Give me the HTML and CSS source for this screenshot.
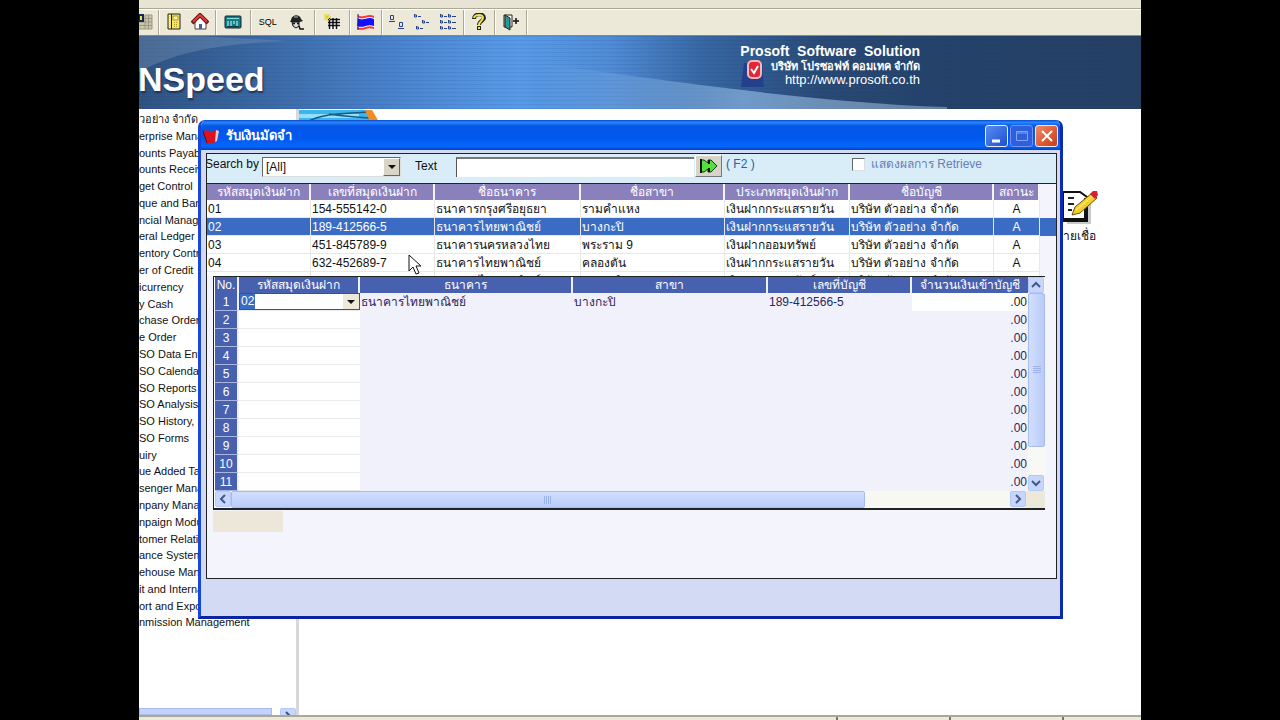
FILE: index.html
```
<!DOCTYPE html>
<html lang="th">
<head>
<meta charset="utf-8">
<title>WINSpeed</title>
<link rel="stylesheet" href="styles.css">
</head>
<body>
<div class="screen">
<header class="toolbar">
  <div class="toolbar-top"></div>
  <div class="tools">
    <div class="tool-group first"><button class="tool" aria-label="Tables"><svg width="14" height="16"><path d="M6 1h7v14H0V8" fill="#c9c6a8"/><path d="M6 1v14M9.500 1v14M13 1v14M0 8h13M0 11.500h13M0 15h13M6 4.500h7M6 1h7" stroke="#9a9884"/><path d="M0 1h4v6H0z" fill="#e8e060" stroke="#16245c" stroke-width="2"/></svg></button></div>
    <div class="tool-group g1"><button class="tool" aria-label="Notebook"><svg width="16" height="18"><path d="M2 1h12v15H2z" fill="#f5e66a" stroke="#222"/><path d="M5.500 1v15" stroke="#222"/><path d="M3.500 2v13" stroke="#fff" stroke-dasharray="1 1"/><path d="M7 3h5v4H7z" fill="#fff8b0" stroke="#a89520"/><path d="M8 9.500h4M8 11.500h4M8 13.500h4" stroke="#a89520" stroke-dasharray="1 1"/></svg></button>
    <button class="tool" aria-label="Home"><svg width="18" height="18"><path d="M4 9v7h11V9L9 4z" fill="#fff" stroke="#444"/><path d="M1 10l8-8 8 8" fill="none" stroke="#611" stroke-width="4"/><path d="M2 9l7-7 7 7" fill="none" stroke="#e23a3a" stroke-width="2"/><path d="M8 11h3v5H8z" fill="#4a5aa0"/></svg></button></div>
    <div class="tool-group g2"><button class="tool" aria-label="Ledger"><svg width="18" height="16"><rect x="1" y="2" width="16" height="12" rx="1" fill="#157f86" stroke="#123"/><path d="M3 4.500h12" stroke="#7fe0e0" stroke-width="1"/><path d="M4 7v5M7 7v5M10 7v3M13 7v5" stroke="#cff" stroke-width="1"/><path d="M3 12.500h12" stroke="#0b3c44"/></svg></button></div>
    <div class="tool-group g3"><button class="tool sql">SQL</button>
    <button class="tool" aria-label="Inspector"><svg width="18" height="18"><path d="M3 7c1-6 9-6 10-1l2 2-3 1H2z" fill="#222"/><path d="M6 4h4" stroke="#bbb"/><path d="M4 9h7v4l-3 2-3-2z" fill="#ddd" stroke="#111"/><path d="M5 10.500h2M9 10.500h2M11 13l1 3h4" stroke="#111" stroke-width="1.500" fill="none"/></svg></button></div>
    <div class="tool-group g4"><button class="tool" aria-label="New grid"><svg width="18" height="18"><path d="M5 5h12v11H5z" fill="#fff"/><path d="M5 6.500h12M5 9.500h12M5 12.500h12M6.500 5v11M10 5v11M13.500 5v11" stroke="#111" stroke-width="1.500"/><path d="M4 1v7M1 4h7M1 1l6 6M7 1L1 7" stroke="#e4d000"/></svg></button></div>
    <div class="tool-group g5"><button class="tool" aria-label="Thai"><svg width="20" height="18"><path d="M2 2c5 4 9-2 16 1v13c-7-3-10 3-17 0z" fill="#f33"/><path d="M2 4c5 4 9-2 16 1v9c-7-3-10 3-17 0z" fill="#fff"/><path d="M2 5c5 4 9-2 16 1v7c-7-3-10 3-17 0z" fill="#11f"/><path d="M2 1v16" stroke="#229"/></svg></button></div>
    <div class="tool-group g6"><button class="tool" aria-label="Large icons"><svg width="18" height="16" fill="none" stroke="#27408c"><path d="M2.500 1.500h3v4h-3zM1 7.500h6M11.500 8.500h3v4h-3zM10 14.500h6"/></svg></button>
    <button class="tool" aria-label="Small icons"><svg width="18" height="16" fill="none" stroke="#27408c"><path d="M1.500 0v3h2v-2h-2M9.500 6v3h2v-2h-2M3.500 12v3h2v-2h-2M5 2.500h3M13 8.500h3M7 14.500h3"/></svg></button>
    <button class="tool" aria-label="List"><svg width="18" height="16" fill="none" stroke="#27408c"><path d="M1.500 0v3h2v-2h-2M9.500 0v3h2v-2h-2M1.500 6v3h2v-2h-2M9.500 6v3h2v-2h-2M1.500 12v3h2v-2h-2M9.500 12v3h2v-2h-2M5 2.500h3M13 2.500h4M5 8.500h3M13 8.500h4M5 14.500h3M13 14.500h4"/></svg></button></div>
    <div class="tool-group g7"><button class="tool" aria-label="Help"><svg width="16" height="18" fill="none"><path d="M3 6c0-6 10-6 10-1 0 3-5 3-5 7M8 13v4" stroke="#222" stroke-width="4"/><path d="M3 5c1-4 9-4 9 0 0 3-4 3-4 7M8 14v2" stroke="#f0e24a" stroke-width="2"/></svg></button></div>
    <div class="tool-group g8"><button class="tool" aria-label="Exit"><svg width="18" height="18"><path d="M2 2h8v12H2z" fill="#fff" stroke="#222"/><path d="M3 2l5 3v12l-5-3z" fill="#2a9a98" stroke="#222"/><path d="M11 8h6M14 5v6" stroke="#111" stroke-width="1.500"/></svg></button></div>
  </div>
</header>
<section class="banner">
  <svg class="banner-art" viewBox="0 0 1002 73" preserveAspectRatio="none"><defs><linearGradient id="sweep"><stop offset="0" stop-color="#8ab8ee" stop-opacity="0"/><stop offset=".5" stop-color="#8ab4e0" stop-opacity=".7"/><stop offset="1" stop-color="#a4bdd6" stop-opacity=".5"/></linearGradient></defs><path d="M0 36C40 14 90 7 150 5L60 0H0z" fill="#8aa6c4" opacity=".3"/><path d="M400 28C520 42 660 66 808 71V73H400z" fill="url(#sweep)"/></svg>
  <h1 class="brand">NSpeed</h1>
  <div class="vendor">
    <strong>Prosoft&nbsp; Software&nbsp; Solution</strong>
    <div class="vendor-row"><svg width="26" height="30"><path d="M4 4h18l2 24H1z" fill="#24408c"/><rect x="8" y="2" width="13" height="17" rx="4" fill="#e02838" stroke="#f7b8bc" stroke-width="2"/><path d="M11 10l3 4 4-7" fill="none" stroke="#fff" stroke-width="2"/></svg>
    <div class="vendor-text"><span class="vendor-th">บริษัท โปรซอฟท์ คอมเทค จำกัด</span><span class="vendor-url">http://www.prosoft.co.th</span></div></div>
  </div>
</section>
<main class="desk">
  <nav class="tree">
    <ul>
      <li>วอย่าง จำกัด</li><li>erprise Manager</li><li>ounts Payable</li><li>ounts Receivable</li><li>get Control</li><li>que and Bank</li><li>ncial Management</li><li>eral Ledger</li><li>entory Control</li><li>er of Credit</li><li>icurrency</li><li>y Cash</li><li>chase Order</li><li>e Order</li><li>SO Data Entry</li><li>SO Calendar</li><li>SO Reports</li><li>SO Analysis</li><li>SO History,</li><li>SO Forms</li><li>uiry</li><li>ue Added Tax</li><li>senger Manager</li><li>npany Manager</li><li>npaign Module</li><li>tomer Relation</li><li>ance System</li><li>ehouse Manager</li><li>it and Internal</li><li>ort and Export</li><li>nmission Management</li>
    </ul>
    <div class="tree-scroll"><div class="tree-thumb"></div><button class="xp-btn" aria-label="Scroll tree right"><svg width="8" height="10"><path d="M2 1l4 4-4 4" fill="none" stroke="#3c5080" stroke-width="2"/></svg></button></div>
  </nav>
  <section class="work">
    <svg width="80" height="14"><rect y="1" width="70" height="12" fill="#3fb4e8"/><path d="M0 7h60" stroke="#8fe0f8" stroke-width="4"/><path d="M8 13C26 3 50 5 68 3M30 5c12 2 26 3 40 4" fill="none" stroke="#155a88" stroke-width="1.500"/><path d="M66 1h7l7 12h-9z" fill="#f08c20"/></svg>
    <div class="shortcut"><svg width="38" height="38"><path d="M4 9v25h24V9" fill="#c8c8c8"/><path d="M0 2h17l7 5v23H0z" fill="#fff" stroke="#111" stroke-width="2"/><path d="M23 8v22H0" fill="none" stroke="#111" stroke-width="4"/><path d="M5 8h6M5 14h6M5 20h4" stroke="#222" stroke-width="2"/><path d="M9 25l3-8L29 3l5 5-17 15z" fill="#f3cf28" stroke="#665010"/><path d="M13 20L31 5" stroke="#fff2a0"/><path d="M27 4l3-3h4l1 4-3 4z" fill="#d8202c"/></svg><span>ายเชื่อ</span></div>
  </section>
</main>
<footer class="status"><span></span><span></span><span></span><span></span></footer>

<div class="window" role="dialog" aria-label="รับเงินมัดจำ">
  <div class="titlebar">
    <svg width="18" height="18"><path d="M1 4l5-1 2 2 6-2 2 2-2 10-9 2z" fill="#d81420"/><path d="M14 3l3 1-2 10-2 1z" fill="#f6c8cc"/><path d="M1 4l4 12" stroke="#700" /></svg>
    <h2>รับเงินมัดจำ</h2>
    <button class="wbtn" aria-label="Minimize"><svg width="18" height="18"><path d="M4 14h8" stroke="#fff" stroke-width="3"/></svg></button>
    <button class="wbtn off" aria-label="Maximize" disabled><svg width="18" height="18"><path d="M3.500 4.500h11v9h-11zM3 6h12" fill="none" stroke="#86a4f0"/></svg></button>
    <button class="wbtn close" aria-label="Close"><svg width="18" height="18"><path d="M4 4l10 10M14 4L4 14" stroke="#fff" stroke-width="2"/></svg></button>
  </div>
  <div class="pane">
    <form class="search">
      <label class="l-by" for="by">Search by</label>
      <span class="combo"><select id="by"><option>[All]</option></select><i></i></span>
      <label class="l-text" for="q">Text</label>
      <input id="q" class="query" type="text">
      <button type="button" class="go" aria-label="Search"><svg width="20" height="16"><path d="M2 2v12h3l4-3v3h3l6-6-6-6H9v3L5 2z" fill="#52e03c" stroke="#123c10"/><path d="M2 1v14M10 2v4M10 10v4" stroke="#111" stroke-width="2"/></svg></button>
      <span class="f2">( F2 )</span>
      <label class="retrieve"><input type="checkbox"><span>แสดงผลการ Retrieve</span></label>
    </form>
    <div class="upper">
      <table class="accounts">
        <colgroup><col class="a1"><col class="a2"><col class="a3"><col class="a4"><col class="a5"><col class="a6"><col class="a7"><col></colgroup>
        <thead><tr><th>รหัสสมุดเงินฝาก</th><th>เลขที่สมุดเงินฝาก</th><th>ชื่อธนาคาร</th><th>ชื่อสาขา</th><th>ประเภทสมุดเงินฝาก</th><th>ชื่อบัญชี</th><th>สถานะ</th><td></td></tr></thead>
        <tbody>
        <tr><td>01</td><td>154-555142-0</td><td>ธนาคารกรุงศรีอยุธยา</td><td>รามคำแหง</td><td>เงินฝากกระแสรายวัน</td><td>บริษัท ตัวอย่าง จำกัด</td><td>A</td><td></td></tr>
        <tr class="sel"><td>02</td><td>189-412566-5</td><td>ธนาคารไทยพาณิชย์</td><td>บางกะปิ</td><td>เงินฝากกระแสรายวัน</td><td>บริษัท ตัวอย่าง จำกัด</td><td>A</td><td></td></tr>
        <tr><td>03</td><td>451-845789-9</td><td>ธนาคารนครหลวงไทย</td><td>พระราม 9</td><td>เงินฝากออมทรัพย์</td><td>บริษัท ตัวอย่าง จำกัด</td><td>A</td><td></td></tr>
        <tr><td>04</td><td>632-452689-7</td><td>ธนาคารไทยพาณิชย์</td><td>คลองตัน</td><td>เงินฝากกระแสรายวัน</td><td>บริษัท ตัวอย่าง จำกัด</td><td>A</td><td></td></tr>
        <tr><td>05</td><td>478-427869-7</td><td>ธนาคารไทยพาณิชย์</td><td>บางกะปิ</td><td>เงินฝากออมทรัพย์</td><td>บริษัท ตัวอย่าง จำกัด</td><td>A</td><td></td></tr>
        </tbody>
      </table>
    </div>
    <div class="lower">
      <div class="lower-main">
        <table class="lines">
          <colgroup><col class="b1"><col class="b2"><col class="b3"><col class="b4"><col class="b5"><col></colgroup>
          <thead><tr><th>No.</th><th>รหัสสมุดเงินฝาก</th><th>ธนาคาร</th><th>สาขา</th><th>เลขที่บัญชี</th><th>จำนวนเงินเข้าบัญชี</th></tr></thead>
          <tbody>
          <tr class="cur"><th>1</th><td><span class="code"><input type="text" value="02" size="1" aria-label="รหัสสมุดเงินฝาก"><button class="drop" aria-label="Choose account"></button></span></td><td>ธนาคารไทยพาณิชย์</td><td>บางกะปิ</td><td>189-412566-5</td><td>.00</td></tr>
          <tr><th>2</th><td></td><td></td><td></td><td></td><td>.00</td></tr>
          <tr><th>3</th><td></td><td></td><td></td><td></td><td>.00</td></tr>
          <tr><th>4</th><td></td><td></td><td></td><td></td><td>.00</td></tr>
          <tr><th>5</th><td></td><td></td><td></td><td></td><td>.00</td></tr>
          <tr><th>6</th><td></td><td></td><td></td><td></td><td>.00</td></tr>
          <tr><th>7</th><td></td><td></td><td></td><td></td><td>.00</td></tr>
          <tr><th>8</th><td></td><td></td><td></td><td></td><td>.00</td></tr>
          <tr><th>9</th><td></td><td></td><td></td><td></td><td>.00</td></tr>
          <tr><th>10</th><td></td><td></td><td></td><td></td><td>.00</td></tr>
          <tr><th>11</th><td></td><td></td><td></td><td></td><td>.00</td></tr>
          </tbody>
        </table>
        <div class="vscroll"><button class="xp-btn" aria-label="Scroll up"><svg width="12" height="10"><path d="M2 7l4-4 4 4" fill="none" stroke="#43598c" stroke-width="2"/></svg></button><div class="vthumb"><svg width="8" height="8"><path d="M0 .5h8M0 2.500h8M0 4.500h8M0 6.500h8" stroke="#9cb2ec"/></svg></div><div class="vgap"></div><button class="xp-btn" aria-label="Scroll down"><svg width="12" height="10"><path d="M2 3l4 4 4-4" fill="none" stroke="#43598c" stroke-width="2"/></svg></button></div>
      </div>
      <div class="hscroll"><button class="xp-btn" aria-label="Scroll left"><svg width="10" height="12"><path d="M7 2L3 6l4 4" fill="none" stroke="#43598c" stroke-width="2"/></svg></button><div class="hthumb"><svg width="8" height="8"><path d="M.5 0v8M2.500 0v8M4.500 0v8M6.500 0v8" stroke="#9cb2ec"/></svg></div><div class="hgap"></div><button class="xp-btn" aria-label="Scroll right"><svg width="10" height="12"><path d="M3 2l4 4-4 4" fill="none" stroke="#43598c" stroke-width="2"/></svg></button><div class="corner"></div></div>
    </div>
    <div class="chip"></div>
  </div>
</div>
<svg class="pointer" width="14" height="22"><path d="M1 1v16l4-4 3 7 3-1-3-7h5z" fill="#fff" stroke="#111"/></svg>
</div>
</body>
</html>
```
FILE: styles.css
```
* { box-sizing: border-box; }
html, body { margin: 0; height: 100%; background: #000; }
body { font: 12px/16px "Liberation Sans", Arial, sans-serif; color: #111; }
button { padding: 0; border: 0; background: none; font: inherit; }
ul { list-style: none; margin: 0; padding: 0; }
.screen { position: relative; display: flex; flex-direction: column; height: 100vh; margin: 0 139px; overflow: hidden; background: #fff; }

.toolbar { flex: none; background: #ece9d8; border-bottom: 1px solid #8a8878; }
.toolbar-top { height: 9px; border-bottom: 1px solid #aaa899; background: #e7e4d3; }
.tools { display: flex; height: 26px; border-top: 1px solid #fff; }
.tool-group { display: flex; align-items: center; justify-content: space-around; padding: 0 2px 2px; border-right: 1px solid #aaa899; box-shadow: 1px 0 #fff; }
.first { width: 20px; justify-content: flex-start; padding: 0 0 2px; }
.g1 { width: 57px; } .g2 { width: 35px; } .g3 { width: 64px; } .g4 { width: 35px; }
.g5 { width: 32px; } .g6 { width: 82px; } .g7 { width: 31px; } .g8 { width: 32px; }
.tool { display: flex; align-items: center; }
.sql { font-size: 9px; }

.banner { position: relative; flex: none; height: 73px; overflow: hidden; display: flex; justify-content: space-between; background: repeating-linear-gradient(rgba(20,50,100,.1) 0 1px, transparent 1px 4px), linear-gradient(90deg, #2f5280 0, #3b6aa6 13%, #4c88d4 28%, #589ae8 38%, #4f8cd6 47%, #3768a4 56%, #294a76 68%, #24426a 80%, #264063 100%); }
.banner-art { position: absolute; inset: 0; width: 100%; height: 100%; }
.brand { position: relative; margin: 26px 0 0 -1px; font: bold 34px/34px "Liberation Sans", Arial, sans-serif; color: #fff; text-shadow: 1px 2px 2px #1c3456; white-space: nowrap; }
.vendor { position: relative; width: 180px; margin: 7px 221px 0 0; color: #fff; text-align: right; white-space: nowrap; }
.vendor strong { display: block; font-size: 14px; line-height: 16px; }
.vendor-row { display: flex; justify-content: space-between; }
.vendor-text { display: flex; flex-direction: column; line-height: 14px; }
.vendor-th { font-size: 11px; font-weight: bold; }
.vendor-url { font-size: 13px; }

.desk { flex: 1; min-height: 0; display: flex; }
.tree { width: 160px; display: flex; flex-direction: column; overflow: hidden; border-right: 3px solid #d8d8dc; }
.tree ul { flex: 1; display: flex; flex-direction: column; padding: 2px 0 77px; font-size: 11px; white-space: nowrap; }
.tree li { flex: 1; }
.tree-scroll { display: flex; height: 7px; overflow: hidden; gap: 8px; }
.tree-thumb { width: 133px; background: #c3d3fb; border: 1px solid #a7bae8; }
.work { flex: 1; display: flex; justify-content: space-between; align-items: flex-start; }
.shortcut { display: flex; flex-direction: column; margin: 81px 40px 0 0; }

.status { flex: none; display: flex; height: 5px; background: #ece9d8; border-top: 2px solid #aaa899; }
.status span { flex: none; width: 113px; border-right: 2px solid #77756a; }
.status span:first-child { flex: 1; }
.status span:last-child { width: 77px; border: 0; }

.window { position: absolute; left: 59px; right: 78px; top: 120px; height: 499px; display: flex; flex-direction: column; background: #d2dbf3; border: 3px solid #1746d8; border-top: 0; border-right-color: #0c2cb0; border-bottom-color: #0a24a4; border-radius: 7px 7px 0 0; overflow: hidden; }
.titlebar { flex: none; display: flex; align-items: center; gap: 2px; height: 30px; margin: 0 -3px; padding: 2px 5px 0 4px; background: linear-gradient(#0a4ad0 0, #2a86fc 8%, #0456e6 20%, #0258ee 60%, #0668fc 88%, #0440c0 100%); }
.titlebar h2 { flex: 1; margin: 0 0 0 4px; font-size: 13px; line-height: 16px; color: #fff; }
.wbtn { display: flex; align-items: center; justify-content: center; width: 23px; height: 22px; border: 1px solid #e8eefc; border-radius: 3px; background: linear-gradient(135deg, #5a8cf0, #1d50d2); }
.wbtn.off { border-color: #6e92ee; background: #2c60e0; }
.wbtn.close { background: linear-gradient(135deg, #f08a68, #cc3a14); }

.pane { flex: 1; margin: 3px 3px 37px 5px; display: flex; flex-direction: column; border: 1px solid #222; background: #f4f4fd; min-height: 0; }
.search { flex: none; display: flex; align-items: flex-start; height: 30px; background: #d8edf8; border-bottom: 1px solid #222; overflow: hidden; white-space: nowrap; }
.l-by { width: 55px; margin-left: -2px; padding-top: 2px; }
.combo { position: relative; width: 139px; margin: 3px 0 0 2px; }
.combo select { appearance: none; width: 100%; height: 20px; padding: 0 3px; border: 1px solid; border-color: #666 #ddd #ddd #666; border-radius: 0; background: #fff; font: inherit; color: #111; }
.combo i { position: absolute; right: 1px; top: 1px; width: 17px; height: 18px; background: #d8d4c8; border: 1px solid; border-color: #fff #666 #666 #fff; }
.combo i::after, .drop::after { content: ""; position: absolute; left: 4px; top: 6px; border: 4px solid transparent; border-top-color: #111; border-bottom: 0; }
.l-text { width: 41px; margin-left: 14px; padding-top: 4px; }
.query { width: 238px; height: 20px; margin-top: 3px; border: 0; border-top: 2px solid #777; border-left: 1px solid #555; background: #fff; font: inherit; }
.go { display: flex; align-items: center; justify-content: center; width: 27px; height: 22px; margin: 1px 4px 0 1px; background: #d8d4c8; border: 1px solid; border-color: #fff #777 #777 #fff; }
.f2 { width: 126px; padding-top: 2px; color: #2c6290; }
.retrieve { display: flex; align-items: center; gap: 4px; padding-top: 2px; color: #6a7cb4; }
.retrieve input { appearance: none; width: 13px; height: 13px; margin: 0 2px 0 0; border: 1px solid; border-color: #666 #ddd #ddd #666; background: #fff; }

table { border-collapse: separate; border-spacing: 0; table-layout: fixed; width: 100%; }
th, td { padding: 0 1px; font-weight: normal; white-space: nowrap; overflow: hidden; text-align: left; }
.upper { flex: none; height: 92px; overflow: hidden; }
.accounts th { height: 16px; line-height: 16px; background: #8a80bc; color: #fff; text-align: center; border-right: 2px solid #f4f4fd; }
.accounts td { height: 18px; line-height: 16px; }
.accounts thead td { height: 16px; }
.accounts tbody td { background: #fff; border-right: 1px solid #e8e8e8; border-bottom: 1px solid #e8e8e8; }
.accounts tbody td:last-child { background: #f4f4fd; border: 0; }
.accounts tbody .sel td { background: #3a6cc4; color: #fff; }
.accounts tbody .sel td:last-child { background: #3a6cc4; }
.accounts td:nth-child(7) { text-align: center; }
.a1 { width: 104px; } .a2 { width: 124px; } .a3 { width: 146px; } .a4 { width: 144px; } .a5 { width: 125px; } .a6 { width: 144px; } .a7 { width: 46px; }

.lower { flex: none; margin: 0 11px 0 6px; border: 1px solid #222; border-right: 0; border-bottom-width: 2px; background: #fff; padding-left: 1px; }
.lower-main { display: flex; height: 214px; }
.lines { flex: 1; width: 0; }
.lines th { height: 18px; line-height: 16px; background: #4860b0; color: #fff; text-align: center; border-right: 2px solid #f0f0fa; }
.lines thead th { height: 16px; }
.lines tbody th { border-bottom: 1px solid #aab4dc; }
.lines thead th:last-child { border-right: 0; }
.lines td { height: 18px; line-height: 17px; background: #f1f1fb; color: #2a2560; }
.lines td:nth-child(2) { background: #fff; border-bottom: 1px solid #ebebeb; }
.lines td:last-child { text-align: right; }
.lines .cur td:last-child { background: #fff; color: #222; }
.lines .cur td:nth-child(2) { padding: 0; }
.b1 { width: 24px; } .b2 { width: 121px; } .b3 { width: 213px; } .b4 { width: 195px; } .b5 { width: 144px; }
.code { display: flex; height: 17px; border: 1px solid #55533a; }
.code input { flex: 1; min-width: 0; border: 0; padding: 0 1px; font: inherit; line-height: 15px; color: #fff; background: linear-gradient(90deg, #3a6cc4 15px, #fff 15px); }
.drop { position: relative; width: 16px; background: #ece9d8; }
.xp-btn { flex: none; display: flex; align-items: center; justify-content: center; width: 16px; height: 16px; background: #c6d6fc; border: 1px solid #b4c8f6; border-radius: 2px; }
.vscroll { flex: none; width: 17px; display: flex; flex-direction: column; background: #f8f8f4; }
.vthumb, .hthumb { display: flex; align-items: center; justify-content: center; border: 1px solid #a8bcec; border-radius: 2px; background: linear-gradient(90deg, #d2defe, #b8ccfa); }
.vthumb { flex: 154; }
.vgap { flex: 28; }
.hscroll { display: flex; height: 17px; background: #f8f8f2; }
.hthumb { flex: 632; background: linear-gradient(#d2defe, #b8ccfa); }
.hgap { flex: 145; }
.corner { width: 19px; background: #ece9d8; }
.chip { width: 70px; height: 21px; margin: 1px 0 0 6px; background: #ece7d8; }
.pointer { position: absolute; left: 269px; top: 254px; }
```
